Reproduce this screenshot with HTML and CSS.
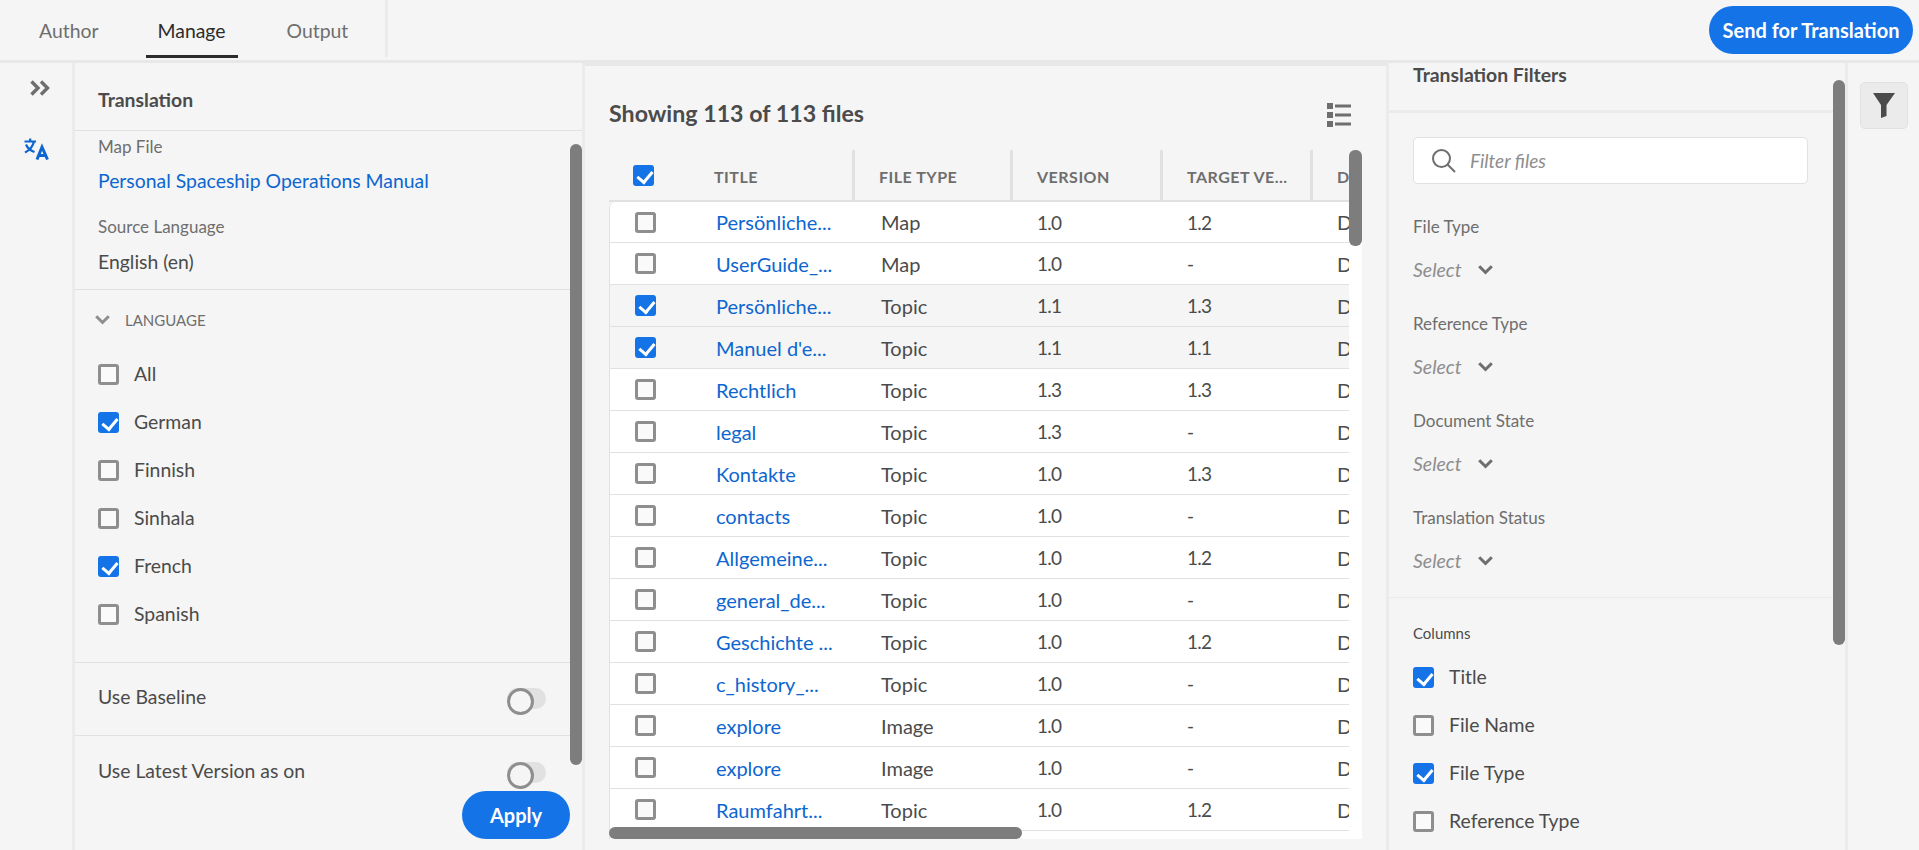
FILE: index.html
```html
<!DOCTYPE html>
<html lang="en">
<head>
    <meta charset="UTF-8">
    <title>Translation - Manage</title>
    <link rel="stylesheet" href="styles.css">
</head>
<body>
    <div class="topbar">
        <div class="tabs">
            <div class="tab">Author</div>
            <div class="tab tab-active">Manage</div>
            <div class="tab">Output</div>
        </div>
        <button class="btn btn-send">Send for Translation</button>
    </div>

    <div class="main">
        <div class="rail">
            <svg class="rail-expand" viewBox="0 0 20 16"><path d="M1.5 1.5 8 8 1.5 14.5M11 1.5 17.5 8 11 14.5"/></svg>
            <svg class="rail-translate" viewBox="0 0 25 22"><path class="tr-thin" d="M0.5 3.5H12M6.2 0.5V3.5M2 6.5C3.5 10 6 12.5 10.5 14M10 3.5C9 8 6 12 1 14.5"/><path class="tr-bold" d="M13 21.5 18 9 23.5 21.5M14.8 17.5H21.8"/></svg>
        </div>

        <div class="panel">
            <div class="panel-title">Translation</div>
            <div class="panel-info">
                <div class="info-label">Map File</div>
                <div class="info-link">Personal Spaceship Operations Manual</div>
                <div class="info-label info-second">Source Language</div>
                <div class="info-value">English (en)</div>
            </div>
            <div class="lang-section">
                <div class="lang-head">
                    <svg class="chev" viewBox="0 0 15 10"><path d="M1.2 1.2 7.5 7.5 13.8 1.2"/></svg>
                    <span>LANGUAGE</span>
                </div>
                <div class="check-row"><span class="box"></span>All</div>
                <div class="check-row"><span class="box box-on"></span>German</div>
                <div class="check-row"><span class="box"></span>Finnish</div>
                <div class="check-row"><span class="box"></span>Sinhala</div>
                <div class="check-row"><span class="box box-on"></span>French</div>
                <div class="check-row"><span class="box"></span>Spanish</div>
            </div>
            <div class="opt-row"><span class="opt-text">Use Baseline</span><span class="toggle"></span></div>
            <div class="opt-row opt-last"><span class="opt-text">Use Latest Version as on</span><span class="toggle"></span></div>
            <button class="btn btn-apply">Apply</button>
            <div class="sb sb-left"></div>
        </div>

        <div class="center">
            <div class="center-head">
                <div class="count">Showing 113 of 113 files</div>
                <svg class="list-icon" viewBox="0 0 24 24"><path d="M0 0H6V6H0ZM8 1.5H24V4.5H8ZM0 9H6V15H0ZM8 10.5H24V13.5H8ZM0 18H6V24H0ZM8 19.5H24V22.5H8Z"/></svg>
            </div>
            <div class="table">
                <div class="thead">
                    <div class="th th-check"><span class="box box-on"></span></div>
                    <div class="th th-title">TITLE</div>
                    <div class="th">FILE TYPE</div>
                    <div class="th">VERSION</div>
                    <div class="th">TARGET VE...</div>
                    <div class="th th-last">D</div>
                </div>
                <div class="tbody">
                    <div class="row"><div class="td-check"><span class="box"></span></div><a class="td-link">Persönliche...</a><div>Map</div><div class="td-num">1.0</div><div class="td-num">1.2</div><div>D</div></div>
                    <div class="row"><div class="td-check"><span class="box"></span></div><a class="td-link">UserGuide_...</a><div>Map</div><div class="td-num">1.0</div><div class="td-num">-</div><div>D</div></div>
                    <div class="row row-sel"><div class="td-check"><span class="box box-on"></span></div><a class="td-link">Persönliche...</a><div>Topic</div><div class="td-num">1.1</div><div class="td-num">1.3</div><div>D</div></div>
                    <div class="row row-sel"><div class="td-check"><span class="box box-on"></span></div><a class="td-link">Manuel d'e...</a><div>Topic</div><div class="td-num">1.1</div><div class="td-num">1.1</div><div>D</div></div>
                    <div class="row"><div class="td-check"><span class="box"></span></div><a class="td-link">Rechtlich</a><div>Topic</div><div class="td-num">1.3</div><div class="td-num">1.3</div><div>D</div></div>
                    <div class="row"><div class="td-check"><span class="box"></span></div><a class="td-link">legal</a><div>Topic</div><div class="td-num">1.3</div><div class="td-num">-</div><div>D</div></div>
                    <div class="row"><div class="td-check"><span class="box"></span></div><a class="td-link">Kontakte</a><div>Topic</div><div class="td-num">1.0</div><div class="td-num">1.3</div><div>D</div></div>
                    <div class="row"><div class="td-check"><span class="box"></span></div><a class="td-link">contacts</a><div>Topic</div><div class="td-num">1.0</div><div class="td-num">-</div><div>D</div></div>
                    <div class="row"><div class="td-check"><span class="box"></span></div><a class="td-link">Allgemeine...</a><div>Topic</div><div class="td-num">1.0</div><div class="td-num">1.2</div><div>D</div></div>
                    <div class="row"><div class="td-check"><span class="box"></span></div><a class="td-link">general_de...</a><div>Topic</div><div class="td-num">1.0</div><div class="td-num">-</div><div>D</div></div>
                    <div class="row"><div class="td-check"><span class="box"></span></div><a class="td-link">Geschichte ...</a><div>Topic</div><div class="td-num">1.0</div><div class="td-num">1.2</div><div>D</div></div>
                    <div class="row"><div class="td-check"><span class="box"></span></div><a class="td-link">c_history_...</a><div>Topic</div><div class="td-num">1.0</div><div class="td-num">-</div><div>D</div></div>
                    <div class="row"><div class="td-check"><span class="box"></span></div><a class="td-link">explore</a><div>Image</div><div class="td-num">1.0</div><div class="td-num">-</div><div>D</div></div>
                    <div class="row"><div class="td-check"><span class="box"></span></div><a class="td-link">explore</a><div>Image</div><div class="td-num">1.0</div><div class="td-num">-</div><div>D</div></div>
                    <div class="row"><div class="td-check"><span class="box"></span></div><a class="td-link">Raumfahrt...</a><div>Topic</div><div class="td-num">1.0</div><div class="td-num">1.2</div><div>D</div></div>
                </div>
                <div class="sb sb-table-v"></div>
                <div class="sb sb-table-h"></div>
            </div>
        </div>

        <div class="filters">
            <div class="filters-title">Translation Filters</div>
            <div class="filters-body">
                <div class="search">
                    <svg class="search-icon" viewBox="0 0 24 24"><circle cx="9.5" cy="9.5" r="8.5"/><path d="M15.5 15.5 23 23"/></svg>
                    <span>Filter files</span>
                </div>
                <div class="f-label">File Type</div>
                <div class="f-select">Select<svg class="chev chev-dark" viewBox="0 0 15 10"><path d="M1.2 1.2 7.5 7.5 13.8 1.2"/></svg></div>
                <div class="f-label">Reference Type</div>
                <div class="f-select">Select<svg class="chev chev-dark" viewBox="0 0 15 10"><path d="M1.2 1.2 7.5 7.5 13.8 1.2"/></svg></div>
                <div class="f-label">Document State</div>
                <div class="f-select">Select<svg class="chev chev-dark" viewBox="0 0 15 10"><path d="M1.2 1.2 7.5 7.5 13.8 1.2"/></svg></div>
                <div class="f-label">Translation Status</div>
                <div class="f-select">Select<svg class="chev chev-dark" viewBox="0 0 15 10"><path d="M1.2 1.2 7.5 7.5 13.8 1.2"/></svg></div>
            </div>
            <div class="columns">
                <div class="columns-head">Columns</div>
                <div class="check-row"><span class="box box-on"></span>Title</div>
                <div class="check-row"><span class="box"></span>File Name</div>
                <div class="check-row"><span class="box box-on"></span>File Type</div>
                <div class="check-row"><span class="box"></span>Reference Type</div>
            </div>
            <div class="sb sb-right"></div>
        </div>

        <div class="filter-rail">
            <div class="filter-btn">
                <svg viewBox="0 0 22 25"><path d="M0 0H22L13.5 12V23L8 25V12Z"/></svg>
            </div>
        </div>
    </div>
</body>
</html>
```

FILE: styles.css
```css
* {
    box-sizing: border-box;
}
html, body {
    margin: 0;
    height: 100%;
    overflow: hidden;
}
body {
    font-family: Lato, "Open Sans", sans-serif;
    font-size: 19.4px;
    color: #4b4b4b;
    background-color: #f5f5f5;
}

/* top bar */
.topbar {
    height: 63px;
    display: flex;
    justify-content: space-between;
    border-bottom: 3px solid #e8e8e8;
}
.tabs {
    width: 388px;
    height: 57px;
    display: flex;
    padding-left: 22px;
    border-right: 3px solid #ebebeb;
}
.tab {
    padding: 0 17px;
    line-height: 62px;
    height: 58px;
    margin-right: 30px;
    color: #6e6e6e;
}
.tab-active {
    color: #2c2c2c;
    padding: 0 12px;
    margin-right: 32px;
    border-bottom: 3px solid #2c2c2c;
}
.btn {
    font-family: inherit;
    font-size: 20px;
    font-weight: 700;
    color: white;
    background-color: #1473e6;
    border: none;
    border-radius: 24px;
    height: 48px;
}
.btn-send {
    width: 204px;
    margin: 6px 6px 0 0;
}

/* layout */
.main {
    display: flex;
    height: 787px;
    overflow: hidden;
}
.rail {
    width: 75px;
    flex: none;
    border-right: 3px solid #ebebeb;
    padding-left: 24px;
}
.rail-expand {
    display: block;
    width: 20px;
    height: 16px;
    margin: 17px 0 0 6px;
    fill: none;
    stroke: #6e6e6e;
    stroke-width: 3.4;
}
.rail-translate {
    display: block;
    width: 25px;
    height: 22px;
    margin-top: 42px;
    fill: none;
    stroke: #0d66d0;
}
.tr-thin {
    stroke-width: 2.2;
}
.tr-bold {
    stroke-width: 3;
}

/* translation panel */
.panel {
    width: 510px;
    flex: none;
    position: relative;
    border-right: 3px solid #ebebeb;
}
.panel-title {
    height: 68px;
    padding: 0 23px;
    line-height: 74px;
    font-weight: 700;
    border-bottom: 1px solid #e1e1e1;
}
.panel-info {
    height: 159px;
    padding: 3px 23px 0;
    border-bottom: 1px solid #e1e1e1;
}
.info-label {
    font-size: 17px;
    line-height: 26px;
    color: #6e6e6e;
}
.info-second {
    margin-top: 16px;
}
.info-link {
    line-height: 34px;
    margin-top: 4px;
    color: #0d66d0;
}
.info-value {
    line-height: 34px;
    margin-top: 5px;
}
.lang-section {
    height: 373px;
    padding: 0 23px;
    border-bottom: 1px solid #e1e1e1;
}
.lang-head {
    height: 60px;
    display: flex;
    align-items: center;
    font-size: 15px;
    color: #6e6e6e;
}
.chev {
    width: 15px;
    height: 10px;
    fill: none;
    stroke: #8e8e8e;
    stroke-width: 3;
    margin: 0 15px 0 -3px;
}
.check-row {
    height: 48px;
    padding-bottom: 2px;
    display: flex;
    align-items: center;
}
.check-row .box {
    margin-top: 2px;
}
.box {
    width: 21px;
    height: 21px;
    flex: none;
    display: inline-block;
    position: relative;
    margin-right: 15px;
    border: 3px solid #8e8e8e;
    border-radius: 3px;
    background-color: #fafafa;
}
.box-on {
    border: none;
    background-color: #1473e6;
}
.box-on::after {
    content: "";
    position: absolute;
    left: 7px;
    top: 3px;
    width: 7px;
    height: 12px;
    border: solid white;
    border-width: 0 3px 3px 0;
    transform: rotate(40deg);
}
.opt-row {
    height: 73px;
    padding: 0 36px 1px 23px;
    display: flex;
    align-items: center;
    justify-content: space-between;
    border-bottom: 1px solid #e1e1e1;
}
.opt-text {
    margin-top: -4px;
}
.opt-last {
    border-bottom: none;
}
.toggle {
    width: 39px;
    height: 21px;
    display: block;
    position: relative;
    border-radius: 11px;
    background-color: #e1e1e1;
}
.toggle::after {
    content: "";
    position: absolute;
    left: 0;
    top: 0;
    width: 21px;
    height: 21px;
    border: 3px solid #8e8e8e;
    border-radius: 50%;
    background-color: #f5f5f5;
}
.btn-apply {
    position: absolute;
    left: 387px;
    top: 728px;
    width: 108px;
}
.sb {
    position: absolute;
    background-color: #7d7d7d;
    border-radius: 6px;
}
.sb-left {
    right: 0;
    top: 81px;
    width: 12px;
    height: 621px;
}

/* file list */
.center {
    width: 804px;
    flex: none;
    padding: 0 24px;
    border-right: 3px solid #ebebeb;
}
.center::before {
    content: "";
    display: block;
    height: 3px;
    margin: 0 -24px;
    background-color: #e8e8e8;
}
.center-head {
    height: 84px;
    display: flex;
    align-items: center;
    justify-content: space-between;
    padding: 10px 11px 0 0;
}
.count {
    font-size: 23.2px;
    font-weight: 700;
}
.list-icon {
    width: 24px;
    height: 24px;
    margin-top: 3px;
    fill: #6e6e6e;
}
.table {
    width: 753px;
    height: 689px;
    position: relative;
    overflow: hidden;
}
.thead {
    height: 52px;
    display: grid;
    grid-template-columns: 105px 141px 158px 150px 150px 49px;
    border-bottom: 2px solid #e1e1e1;
    font-size: 16px;
    font-weight: 700;
    color: #6e6e6e;
    letter-spacing: 0.5px;
}
.th {
    height: 50px;
    display: flex;
    align-items: center;
    padding: 3px 0 0 24px;
    border-right: 3px solid #e1e1e1;
    white-space: nowrap;
}
.th-title {
    padding-left: 0;
}
.th-check {
    padding-top: 0;
    border-right: none;
}
.th-last {
    border-right: none;
}
.tbody {
    background-color: white;
    border-left: 1px solid #e1e1e1;
    border-top-left-radius: 6px;
    height: 637px;
    overflow: hidden;
}
.row {
    height: 42px;
    width: 739px;
    display: grid;
    grid-template-columns: 106px 165px 156px 150px 150px 30px;
    align-items: center;
    border-bottom: 1px solid #e1e1e1;
    overflow: hidden;
    white-space: nowrap;
    font-size: 20px;
}
.row:first-child {
    height: 41px;
}
.row-sel {
    background-color: #f5f5f5;
}
.td-check {
    padding-left: 25px;
    display: flex;
}
.td-link {
    color: #0d66d0;
}
.td-num {
    font-size: 19px;
    letter-spacing: -0.8px;
}
.sb-table-v {
    left: 740px;
    top: 0;
    width: 13px;
    height: 96px;
}
.sb-table-h {
    left: 0;
    top: 677px;
    width: 413px;
    height: 12px;
}

/* filters */
.filters {
    width: 459px;
    flex: none;
    position: relative;
    border-right: 3px solid #ebebeb;
}
.filters-title {
    height: 50px;
    padding: 0 24px;
    line-height: 24px;
    font-weight: 700;
    border-bottom: 3px solid #ebebeb;
}
.filters-body {
    height: 485px;
    padding: 24px 37px 0 24px;
    border-bottom: 1px solid #ebebeb;
}
.search {
    height: 47px;
    display: flex;
    align-items: center;
    padding-left: 18px;
    margin-bottom: 31px;
    background-color: white;
    border: 1px solid #e1e1e1;
    border-radius: 5px;
    font-size: 19px;
    font-style: italic;
    color: #8e8e8e;
}
.search-icon {
    width: 24px;
    height: 24px;
    margin-right: 14px;
    fill: none;
    stroke: #6e6e6e;
    stroke-width: 2;
}
.f-label {
    font-size: 17px;
    line-height: 24px;
    height: 28px;
    color: #6e6e6e;
}
.f-select {
    display: flex;
    align-items: center;
    height: 69px;
    padding-bottom: 16px;
    font-size: 19.5px;
    font-style: italic;
    color: #8e8e8e;
}
.chev-dark {
    stroke: #6e6e6e;
    margin: 0 0 0 16px;
}
.columns {
    padding: 24px 24px 0;
}
.columns-head {
    font-size: 15px;
    line-height: 22px;
    height: 31px;
}
.sb-right {
    right: 0;
    top: 17px;
    width: 12px;
    height: 565px;
}
.filter-rail {
    flex: 1;
    padding: 19px 0 0 12px;
}
.filter-btn {
    width: 48px;
    height: 47px;
    display: flex;
    align-items: center;
    justify-content: center;
    background-color: #ebebeb;
    border: 1px solid #e1e1e1;
    border-radius: 5px;
}
.filter-btn svg {
    width: 22px;
    height: 25px;
    fill: #4b4b4b;
}
```
